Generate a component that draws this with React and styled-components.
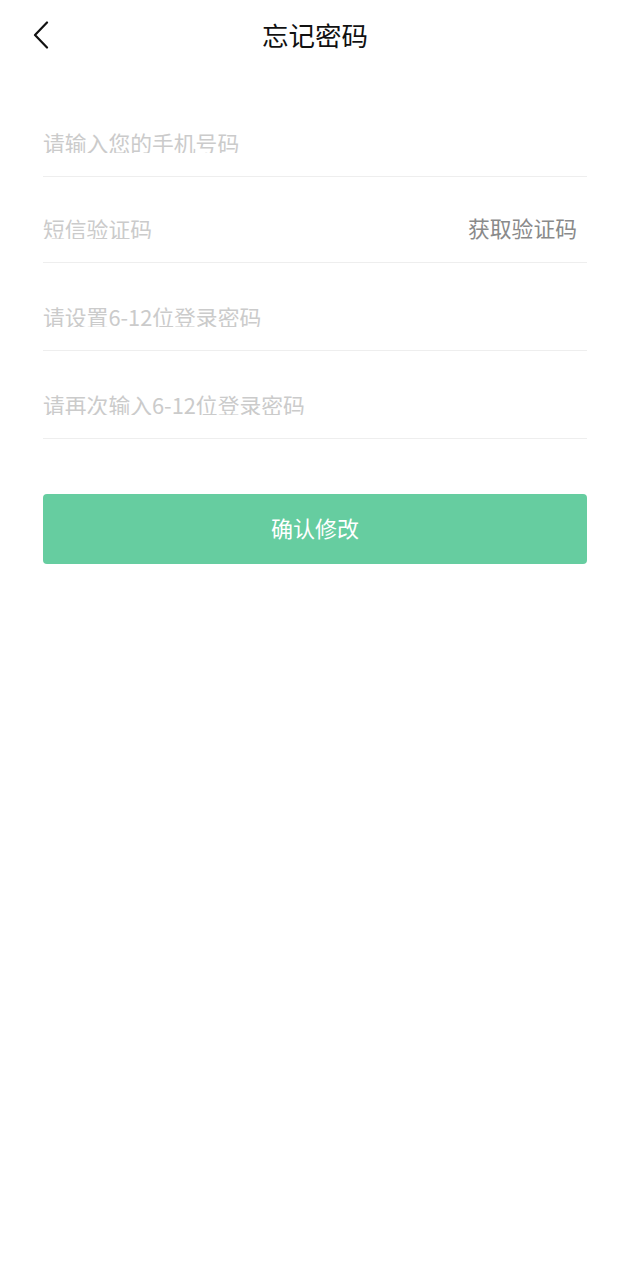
import React from 'react';
import styled, { createGlobalStyle } from 'styled-components';

const GlobalStyle = createGlobalStyle`
  html, body {
    margin: 0;
    padding: 0;
    background: #fff;
  }
  body {
    font-family: "Noto Sans CJK SC", "Noto Sans", Roboto, sans-serif;
  }
`;

const Page = styled.div`
  width: 630px;
  min-height: 1280px;
  background: #fff;
`;

const Header = styled.div`
  position: relative;
  height: 72px;
  display: flex;
  align-items: center;
  justify-content: center;
`;

const BackButton = styled.button`
  position: absolute;
  left: 26px;
  top: 16px;
  width: 30px;
  height: 38px;
  padding: 0;
  border: none;
  background: none;
  display: flex;
  align-items: center;
  justify-content: center;
`;

const Title = styled.h1`
  margin: 0 0 2px;
  font-size: 26.5px;
  font-weight: 400;
  color: #111;
  line-height: 70px;
`;

const Form = styled.form`
  margin-top: 17px;
  padding: 0 43px;
`;

const Row = styled.div`
  display: flex;
  align-items: center;
  height: 22px;
  padding: ${(p) => (p.$tight ? '40px 10px 23px 0' : '42px 10px 23px 0')};
  border-bottom: 1px solid #eeeeee;
`;

const Input = styled.input`
  flex: 1;
  min-width: 0;
  border: none;
  outline: none;
  padding: 0;
  height: 22px;
  font-family: inherit;
  font-size: 21.8px;
  color: #333;
  background: transparent;

  &::placeholder {
    color: #cbcbcb;
  }
`;

const CodeLink = styled.span`
  font-size: 21.8px;
  line-height: 22px;
  color: #8a8a8a;
`;

const Submit = styled.button`
  display: block;
  width: 100%;
  height: 70px;
  margin-top: 55px;
  border: none;
  border-radius: 4px;
  background: #66cda0;
  color: #fff;
  font-family: inherit;
  font-size: 22px;
  padding: 0 0 4px;
`;

const fields = [
  { placeholder: '请输入您的手机号码', type: 'tel' },
  { placeholder: '短信验证码', type: 'text', code: true },
  { placeholder: '请设置6-12位登录密码', type: 'password' },
  { placeholder: '请再次输入6-12位登录密码', type: 'password' },
];

export default function App() {
  return (
    <Page>
      <GlobalStyle />
      <Header>
        <BackButton type="button">
          <svg width="18" height="28" viewBox="0 0 18 28" fill="none">
            <path d="M15 1.5L3 14l12 12.5" stroke="#111" strokeWidth="2.2" strokeLinecap="round" strokeLinejoin="round" />
          </svg>
        </BackButton>
        <Title>忘记密码</Title>
      </Header>
      <Form onSubmit={(e) => e.preventDefault()}>
        {fields.map((f) => (
          <Row key={f.placeholder} $tight={f.code}>
            <Input type={f.type} placeholder={f.placeholder} />
            {f.code && <CodeLink>获取验证码</CodeLink>}
          </Row>
        ))}
        <Submit type="submit">确认修改</Submit>
      </Form>
    </Page>
  );
}
